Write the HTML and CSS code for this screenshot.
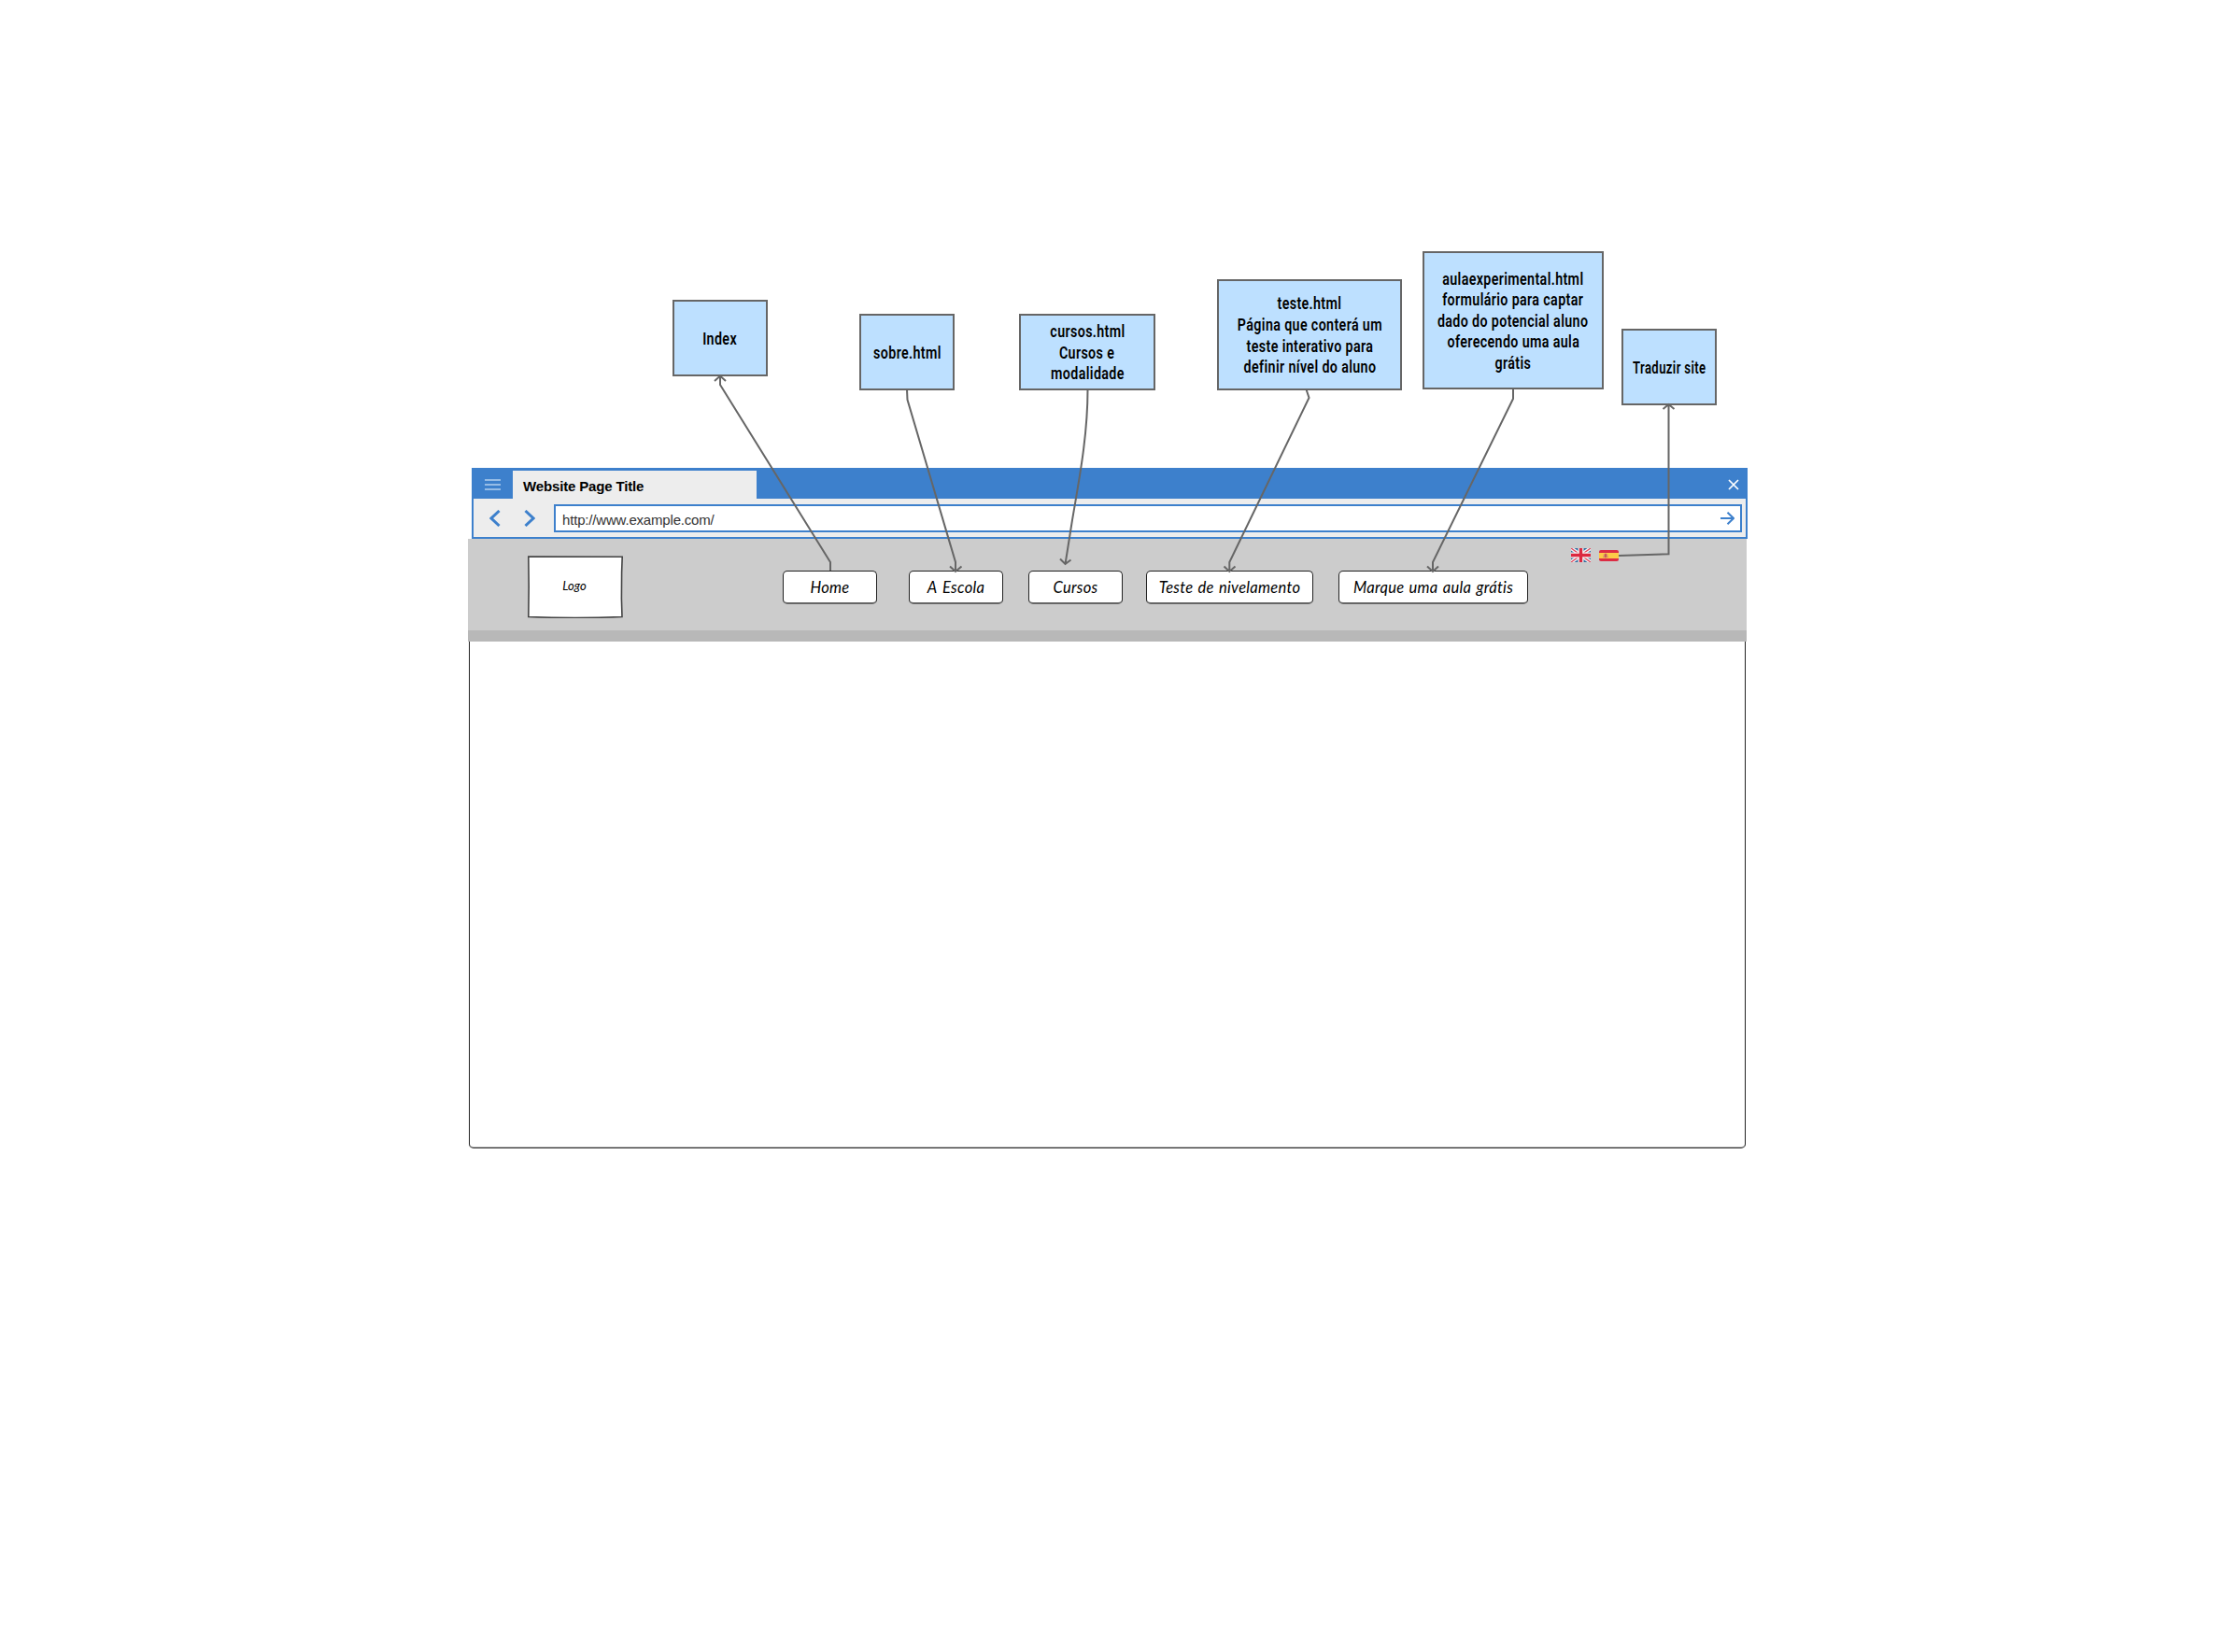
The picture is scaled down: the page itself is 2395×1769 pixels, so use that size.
FILE: index.html
```html
<!DOCTYPE html>
<html lang="pt-BR">
<head>
<meta charset="utf-8">
<title>Wireframe</title>
<link rel="stylesheet" href="styles.css">
</head>
<body>
<main class="canvas">
  <section class="browser">
    <div class="chrome">
      <div class="titlebar">
        <svg class="menu" width="17" height="12" viewBox="0 0 17 12"><path d="M0 1H17M0 6H17M0 11H17"/></svg>
        <div class="tab">Website Page Title</div>
        <svg class="close" width="12" height="12" viewBox="0 0 12 12"><path d="M1 1L11 11M11 1L1 11"/></svg>
      </div>
      <div class="toolbar">
        <svg class="chevron" width="12" height="18" viewBox="0 0 12 18"><path d="M10.500 1L2 9L10.500 17"/></svg>
        <svg class="chevron" width="12" height="18" viewBox="0 0 12 18"><path d="M1.500 1L10 9L1.500 17"/></svg>
        <div class="address">
          <span>http://www.example.com/</span>
          <svg class="go" width="15" height="14" viewBox="0 0 15 14"><path d="M0 7H14M7.500 .7L14 7L7.500 13.300"/></svg>
        </div>
      </div>
    </div>
    <header class="header">
      <div class="logo">
        <svg class="logo-frame" width="102" height="67" viewBox="0 0 102 67"><path d="M.8 1L101.200 1.300L100.600 18L100.400 46L101 65.500Q51 67.500 .8 65.500L1.200 33Z"/></svg>
        <span>Logo</span>
      </div>
      <nav class="nav">
        <a class="button home"><span>Home</span></a>
        <a class="button escola"><span>A Escola</span></a>
        <a class="button cursos"><span>Cursos</span></a>
        <a class="button teste"><span>Teste de nivelamento</span></a>
        <a class="button aula"><span>Marque uma aula grátis</span></a>
      </nav>
      <div class="flags">
        <svg width="21" height="15" viewBox="0 0 21 15">
          <rect width="21" height="15" rx="1.500" fill="#356f9f"/>
          <path d="M0 0L21 15M21 0L0 15" stroke="#f1f3f5" stroke-width="4"/>
          <path d="M0 0L21 15M21 0L0 15" stroke="#e0465a" stroke-width="1.300"/>
          <path d="M10.500 0V15M0 7.500H21" stroke="#f4f4f4" stroke-width="6"/>
          <path d="M10.500 0V15M0 7.500H21" stroke="#dc2840" stroke-width="3.400"/>
        </svg>
        <svg width="21" height="12" viewBox="0 0 21 12">
          <rect width="21" height="12" rx="2" fill="#dc2c44"/>
          <rect y="3" width="21" height="6" fill="#fcca48"/>
          <path d="M4.500 4.500H9.500V8H4.500Z" fill="#e9a05b"/>
          <path d="M6 4H8V8H6ZM4 7.500H5.200M9 7.500H10" fill="#d8424a" stroke="#b98470" stroke-width=".6"/>
        </svg>
      </div>
    </header>
    <div class="page"></div>
  </section>

  <div class="note note-index"><span>Index</span></div>
  <div class="note note-sobre"><span>sobre.html</span></div>
  <div class="note note-cursos"><span>cursos.html</span><span>Cursos e</span><span>modalidade</span></div>
  <div class="note note-teste"><span>teste.html</span><span>Página que conterá um</span><span>teste interativo para</span><span>definir nível do aluno</span></div>
  <div class="note note-aula"><span>aulaexperimental.html</span><span>formulário para captar</span><span>dado do potencial aluno</span><span>oferecendo uma aula</span><span>grátis</span></div>
  <div class="note note-traduzir"><span>Traduzir site</span></div>

  <svg class="connectors" width="2395" height="1769" viewBox="0 0 2395 1769">
    <path d="M889 611V602L771 412V402M765 408L771 402.500L777 408"/>
    <path d="M971 417L971.500 428L1023 602V612M1017 606.500L1023 612L1029.500 606.500"/>
    <path d="M1164.500 417C1164.500 470 1154 520 1147.500 560L1140.500 604M1135 598.500L1140.500 604L1146.500 599.500"/>
    <path d="M1398.500 417L1401.500 426L1316.300 602V612M1310.500 606.500L1316.300 612L1322.500 606.500"/>
    <path d="M1620 416V427L1534 602V612M1528 606.500L1534 612L1540 606.500"/>
    <path d="M1733 595L1786.500 593.300V433M1780.500 438L1786.500 433L1792.500 438"/>
  </svg>
</main>
</body>
</html>
```
FILE: styles.css
```css
* { box-sizing: border-box; }
body { margin: 0; background: #fff; color: #000; }
svg { display: block; flex: none; fill: none; }
.canvas { position: relative; width: 2395px; height: 1769px; overflow: hidden; }

.browser { position: absolute; left: 501px; top: 501px; width: 1370px; font-family: "Liberation Sans", Arial, sans-serif; }
.chrome { margin-left: 4px; height: 76px; border: 2px solid #3d80cc; border-top: 0; background: #ededed; }
.titlebar { display: flex; align-items: flex-end; height: 33px; margin: 0 -2px; padding-left: 14px; background: #3d80cc; }
.menu { align-self: center; margin: 2px 13px 0 0; stroke: #b4d0ee; stroke-width: 1.6; }
.tab { width: 261px; height: 30px; padding-left: 11px; background: #ededed; font-weight: 700; font-size: 15px; letter-spacing: -.15px; line-height: 33px; }
.close { margin: 0 9px 9px auto; stroke: #fff; stroke-width: 1.7; }
.toolbar { display: flex; align-items: center; gap: 25px; height: 41px; padding: 1px 4px 0 17px; }
.chevron { stroke: #3d80cc; stroke-width: 3; }
.address { flex: 1; display: flex; align-items: center; justify-content: space-between; height: 30px; margin-left: -5px; padding: 0 6px 0 7px; border: 2px solid #3d80cc; background: #fff; color: #333; font-size: 15px; letter-spacing: -.18px; line-height: 30px; }
.address span { padding-top: 3px; }
.go { stroke: #3d80cc; stroke-width: 2; }

.header { display: flex; width: 1369px; height: 110px; padding: 18px 0 0 64px; background: #ccc; border-bottom: 12px solid #b8b8b8; font-family: "Segoe Print", Lato, sans-serif; font-style: italic; }
.logo { position: relative; width: 102px; height: 67px; font-size: 13px; line-height: 65px; text-align: center; }
.logo-frame { position: absolute; inset: 0; fill: #fff; stroke: #444; stroke-width: 1.6; }
.logo span { position: relative; left: -1px; }
.nav { display: flex; margin: 16px 0 0 171px; height: 36px; }
.button { display: block; height: 36px; border: 1px solid #222; border-bottom: 2px solid #666; border-radius: 5px; background: #fff; font-size: 16.500px; letter-spacing: .3px; line-height: 35px; text-align: center; white-space: nowrap; }
.home, .escola, .cursos { width: 101px; }
.escola { margin-left: 34px; word-spacing: 2px; }
.cursos { margin-left: 27px; }
.teste { width: 179px; margin-left: 25px; word-spacing: 1px; }
.aula { width: 203px; margin-left: 27px; word-spacing: 1px; }
.flags { display: flex; align-items: center; gap: 9px; height: 15px; margin: -8px 0 0 46px; }
.page { width: 1367px; height: 543px; margin-left: 1px; border: solid #222; border-width: 0 1px 2px; border-bottom-color: #777; border-radius: 0 0 5px 5px; }

.connectors { position: absolute; inset: 0; stroke: #666; stroke-width: 2; }

.note { position: absolute; display: flex; flex-direction: column; align-items: center; justify-content: center; padding-top: 2px; border: 2px solid #666; background: #bde0ff; font-family: "Agency FB", Roboto, sans-serif; font-size: 19px; font-weight: 600; letter-spacing: .5px; line-height: 22.600px; white-space: nowrap; }
.note span { transform: scaleX(.75); }
.note-index { left: 720px; top: 321px; width: 102px; height: 82px; }
.note-sobre { left: 920px; top: 336px; width: 102px; height: 82px; }
.note-cursos { left: 1091px; top: 336px; width: 146px; height: 82px; }
.note-teste { left: 1303px; top: 299px; width: 198px; height: 119px; }
.note-aula { left: 1523px; top: 269px; width: 194px; height: 148px; }
.note-traduzir { left: 1736px; top: 352px; width: 102px; height: 82px; font-size: 17.500px; }
```
